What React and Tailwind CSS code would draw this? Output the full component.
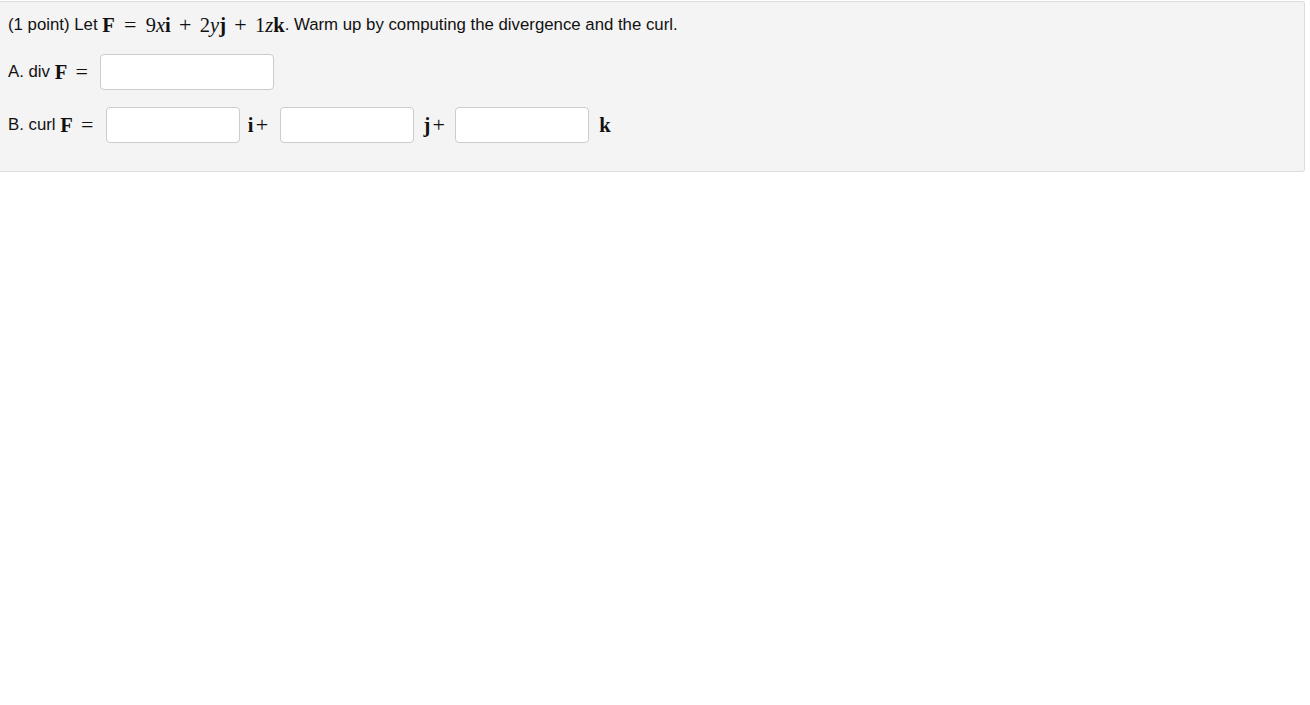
import React from "react";

const M = ({ children, className = "" }) => (
  <span className={`font-['Liberation_Serif',serif] text-[20.5px] whitespace-nowrap ${className}`}>{children}</span>
);

const Op = ({ children, className = "" }) => (
  <span className={`inline-block w-[17px] text-center text-[22px] leading-none ${className}`}>{children}</span>
);

const Input = ({ w }) => (
  <input
    type="text"
    className={`h-[36px] ${w} rounded-[4px] border border-[#cccccc] bg-white`}
  />
);

export default function App() {
  return (
    <div className="min-h-[705px] w-[1310px] bg-white font-['Liberation_Sans',Arial,sans-serif] text-[16.8px] text-[#111]">
      <div className="mt-px w-[1305px] h-[171px] rounded-r-[3px] border-y border-r border-[#dcdcdc] bg-[#f4f4f4] pl-[8px] pt-[10px]">
        <div className="flex h-[26px] items-center">
          <span className="whitespace-pre">(1 point) Let </span>
          <M>
            <b>F</b><Op className="mx-[7px]">=</Op>9<i>x</i><b>i</b>
            <Op className="mx-[6px]">+</Op>2<i>y</i><b>j</b>
            <Op className="mx-[6px]">+</Op>1<i>z</i><b>k</b>
          </M>
          <span>. Warm up by computing the divergence and the curl.</span>
        </div>
        <div className="mt-[16px] flex items-center">
          <span className="whitespace-pre">A. div </span>
          <M>
            <b>F</b><Op className="ml-[6px]">=</Op>
          </M>
          <span className="ml-[10px]">
            <Input w="w-[174px]" />
          </span>
        </div>
        <div className="mt-[17px] flex items-center">
          <span className="whitespace-pre">B. curl </span>
          <M>
            <b>F</b><Op className="ml-[6px]">=</Op>
          </M>
          <span className="ml-[10px]">
            <Input w="w-[134px]" />
          </span>
          <M className="ml-[8px] mr-[10px]">
            <b>i</b><Op>+</Op>
          </M>
          <Input w="w-[134px]" />
          <M className="ml-[9px] mr-[8px]">
            <b>j</b><Op>+</Op>
          </M>
          <Input w="w-[134px]" />
          <M className="ml-[10px]">
            <b>k</b>
          </M>
        </div>
      </div>
    </div>
  );
}
